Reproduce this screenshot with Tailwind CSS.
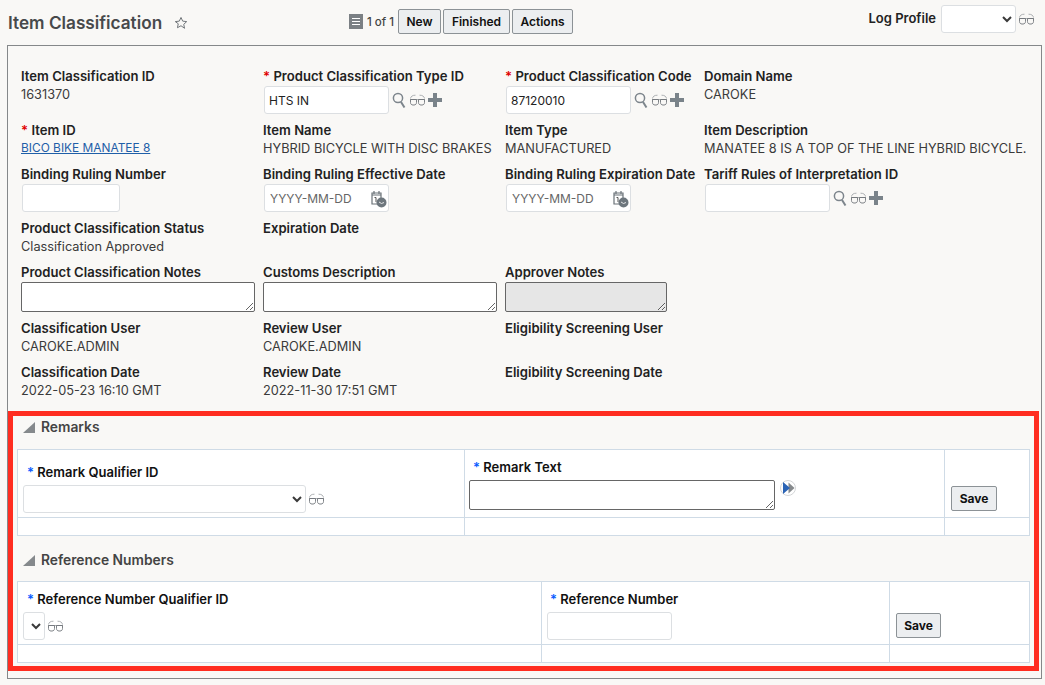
<!DOCTYPE html>
<html lang="en">
    <head>
        <meta charset="UTF-8" />
        <title>Item Classification</title>
        <script src="https://cdn.jsdelivr.net/npm/@tailwindcss/browser@4"></script>
    </head>
    <body class="w-[1045px] h-[685px] overflow-hidden bg-[#f9f8f6] font-['Inter','Liberation_Sans',sans-serif] text-[12.750px] leading-[18px] text-[#3a3a3a]">
        <!-- shared icons -->
        <svg class="hidden">
            <symbol id="glasses" viewBox="0 0 17 12">
                <path d="M1.500 4.500C1.800 2.400 3.400 1.200 6.500 1.200M15.500 4.500C15.200 2.400 13.600 1.200 10.500 1.200M1 5.500H16" fill="none" stroke="#9a9ea2" stroke-width="0.800" />
                <path d="M1.500 5.500H7.500V8.500C7.500 10 6.500 11 5 11H4C2.500 11 1.500 10 1.500 8.500Z" fill="none" stroke="#6f7479" stroke-width="0.900" />
                <path d="M9.500 5.500H15.500V8.500C15.500 10 14.500 11 13 11H12C10.500 11 9.500 10 9.500 8.500Z" fill="none" stroke="#6f7479" stroke-width="0.900" />
            </symbol>
            <symbol id="search" viewBox="0 0 15 16">
                <circle cx="6" cy="6" r="4.600" fill="none" stroke="#7d858c" stroke-width="1.500" />
                <path d="M9 10L12.500 15.500" stroke="#7d858c" stroke-width="2" />
            </symbol>
            <symbol id="plus" viewBox="0 0 14 14">
                <path d="M5 0H9V5H14V9H9V14H5V9H0V5H5Z" fill="#7a838a" />
            </symbol>
            <symbol id="calendar" viewBox="0 0 17 18">
                <path d="M2 3H11V14H2Z" fill="none" stroke="#6b7278" stroke-width="1.200" />
                <path d="M4 1V4M9 1V4M2 5H11" stroke="#6b7278" stroke-width="1.200" />
                <path d="M4.500 7.500H6V12" fill="none" stroke="#555" stroke-width="1" />
                <circle cx="11.500" cy="12.500" r="5" fill="#6d767d" />
                <path d="M9 12L11.500 13.500L14 12.500" fill="none" stroke="#fff" stroke-width="0.800" />
            </symbol>
            <symbol id="triangle" viewBox="0 0 12 12">
                <path d="M12 1V12H0Z" fill="#85898c" />
            </symbol>
        </svg>

        <!-- page header -->
        <div class="flex h-[45px] items-start">
            <h1 class="ml-2 mt-[13px] w-[154px] whitespace-nowrap text-[17.200px] leading-5 font-semibold text-[#47494b]">Item Classification</h1>
            <svg class="ml-[12px] mt-[16px] w-[14px] h-[14px]" viewBox="0 0 24 24" fill="none" stroke="#6f7478" stroke-width="1.700"><path d="M12 2.500l2.900 6.300 6.900.8-5.100 4.700 1.400 6.800L12 16.700l-6.100 3.400 1.400-6.800L2.200 9.600l6.900-.8z" /></svg>
            <div class="ml-[161px] mt-[14px] flex h-[15px] w-[14px] flex-col justify-center gap-[2px] bg-[#7b8084] px-[3px]">
                <span class="h-px bg-white"></span><span class="h-px bg-white"></span><span class="h-px bg-white"></span>
            </div>
            <span class="ml-[4px] mt-[13px] w-[31px] whitespace-nowrap text-[11.500px] font-medium text-[#444]">1 of 1</span>
            <button class="mt-[9px] h-[25px] w-[43px] rounded-[2px] border border-[#8c9296] bg-[#eceef0] text-[12px] font-semibold text-[#111]">New</button>
            <button class="ml-[2px] mt-[9px] h-[25px] w-[67px] rounded-[2px] border border-[#8c9296] bg-[#eceef0] text-[12px] font-semibold text-[#111]">Finished</button>
            <button class="ml-[2px] mt-[9px] h-[25px] w-[61px] rounded-[2px] border border-[#8c9296] bg-[#eceef0] text-[12px] font-semibold text-[#111]">Actions</button>
            <span class="ml-auto mt-[9px] text-[13px] font-semibold text-[#222]">Log Profile</span>
            <select class="ml-[5px] mt-[5px] h-[28px] w-[75px] rounded-[3px] border border-[#dcdfe2] bg-white"></select>
            <svg class="ml-[2px] mr-[10px] mt-[13px] w-[17px] h-[12px]"><use href="#glasses" /></svg>
        </div>

        <!-- main panel -->
        <div class="ml-[7px] h-[634px] w-[1035px] border border-[#85888a]">
            <div class="grid grid-cols-[242px_242px_199px_1fr] grid-rows-[54px_44px_54px_44px_56px_44px_48px] pl-[13px] pt-[21px]">
                <div>
                    <div class="text-[13.100px] font-semibold text-[#222]">Item Classification ID</div>
                    <div class="mt-px">1631370</div>
                </div>
                <div>
                    <div class="text-[13.100px] font-semibold text-[#222]"><span class="text-[#e00000]">*</span> Product Classification Type ID</div>
                    <div class="mt-px flex items-center">
                        <input value="HTS IN" class="ml-px h-[28px] w-[125px] rounded-[3px] border border-[#dcdfe2] bg-white px-[4px] text-[12px] text-[#222]" />
                        <svg class="ml-[3px] w-[15px] h-[16px]"><use href="#search" /></svg>
                        <svg class="ml-[2px] w-[17px] h-[12px]"><use href="#glasses" /></svg>
                        <svg class="ml-[2px] w-[14px] h-[14px]"><use href="#plus" /></svg>
                    </div>
                </div>
                <div>
                    <div class="whitespace-nowrap text-[13.100px] font-semibold text-[#222]"><span class="text-[#e00000]">*</span> Product Classification Code</div>
                    <div class="mt-px flex items-center">
                        <input value="87120010" class="ml-px h-[28px] w-[125px] rounded-[3px] border border-[#dcdfe2] bg-white px-[4px] text-[12px] text-[#222]" />
                        <svg class="ml-[3px] w-[15px] h-[16px]"><use href="#search" /></svg>
                        <svg class="ml-[2px] w-[17px] h-[12px]"><use href="#glasses" /></svg>
                        <svg class="ml-[2px] w-[14px] h-[14px]"><use href="#plus" /></svg>
                    </div>
                </div>
                <div>
                    <div class="text-[13.100px] font-semibold text-[#222]">Domain Name</div>
                    <div class="mt-px">CAROKE</div>
                </div>

                <div>
                    <div class="text-[13.100px] font-semibold text-[#222]"><span class="text-[#e00000]">*</span> Item ID</div>
                    <a href="#" class="text-[11.900px] text-[#1f5fa8] underline">BICO BIKE MANATEE 8</a>
                </div>
                <div>
                    <div class="text-[13.100px] font-semibold text-[#222]">Item Name</div>
                    <div class="mt-px whitespace-nowrap">HYBRID BICYCLE WITH DISC BRAKES</div>
                </div>
                <div>
                    <div class="text-[13.100px] font-semibold text-[#222]">Item Type</div>
                    <div class="mt-px">MANUFACTURED</div>
                </div>
                <div>
                    <div class="text-[13.100px] font-semibold text-[#222]">Item Description</div>
                    <div class="mt-px whitespace-nowrap">MANATEE 8 IS A TOP OF THE LINE HYBRID BICYCLE.</div>
                </div>

                <div>
                    <div class="text-[13.100px] font-semibold text-[#222]">Binding Ruling Number</div>
                    <input class="ml-px mt-px h-[28px] w-[98px] rounded-[3px] border border-[#dcdfe2] bg-white" />
                </div>
                <div>
                    <div class="whitespace-nowrap text-[13.100px] font-semibold text-[#222]">Binding Ruling Effective Date</div>
                    <div class="relative ml-px mt-px h-[28px] w-[125px]">
                        <input placeholder="YYYY-MM-DD" class="h-[28px] w-[125px] rounded-[3px] border border-[#dcdfe2] bg-white px-[5px] text-[12px] placeholder:text-[#666]" />
                        <svg class="absolute right-[2px] top-[6px] w-[17px] h-[18px]"><use href="#calendar" /></svg>
                    </div>
                </div>
                <div>
                    <div class="whitespace-nowrap text-[13.100px] font-semibold text-[#222]">Binding Ruling Expiration Date</div>
                    <div class="relative ml-px mt-px h-[28px] w-[125px]">
                        <input placeholder="YYYY-MM-DD" class="h-[28px] w-[125px] rounded-[3px] border border-[#dcdfe2] bg-white px-[5px] text-[12px] placeholder:text-[#666]" />
                        <svg class="absolute right-[2px] top-[6px] w-[17px] h-[18px]"><use href="#calendar" /></svg>
                    </div>
                </div>
                <div>
                    <div class="whitespace-nowrap text-[13.100px] font-semibold text-[#222]">Tariff Rules of Interpretation ID</div>
                    <div class="mt-px flex items-center">
                        <input class="ml-px h-[28px] w-[125px] rounded-[3px] border border-[#dcdfe2] bg-white" />
                        <svg class="ml-[3px] w-[15px] h-[16px]"><use href="#search" /></svg>
                        <svg class="ml-[2px] w-[17px] h-[12px]"><use href="#glasses" /></svg>
                        <svg class="ml-[2px] w-[14px] h-[14px]"><use href="#plus" /></svg>
                    </div>
                </div>

                <div>
                    <div class="text-[13.100px] font-semibold text-[#222]">Product Classification Status</div>
                    <div class="mt-px">Classification Approved</div>
                </div>
                <div class="text-[13.100px] font-semibold text-[#222]">Expiration Date</div>
                <div></div>
                <div></div>

                <div>
                    <div class="text-[13.100px] font-semibold text-[#222]">Product Classification Notes</div>
                    <textarea class="mt-px block h-[30px] w-[234px] rounded-[2px] border border-[#666] bg-white"></textarea>
                </div>
                <div>
                    <div class="text-[13.100px] font-semibold text-[#222]">Customs Description</div>
                    <textarea class="mt-px block h-[30px] w-[234px] rounded-[2px] border border-[#666] bg-white"></textarea>
                </div>
                <div>
                    <div class="text-[13.100px] font-semibold text-[#222]">Approver Notes</div>
                    <textarea disabled class="mt-px block h-[30px] w-[162px] rounded-[2px] border border-[#666] bg-[#e6e6e6]"></textarea>
                </div>
                <div></div>

                <div>
                    <div class="text-[13.100px] font-semibold text-[#222]">Classification User</div>
                    <div class="mt-px">CAROKE.ADMIN</div>
                </div>
                <div>
                    <div class="text-[13.100px] font-semibold text-[#222]">Review User</div>
                    <div class="mt-px">CAROKE.ADMIN</div>
                </div>
                <div class="whitespace-nowrap text-[13.100px] font-semibold text-[#222]">Eligibility Screening User</div>
                <div></div>

                <div>
                    <div class="text-[13.100px] font-semibold text-[#222]">Classification Date</div>
                    <div class="mt-px">2022-05-23 16:10 GMT</div>
                </div>
                <div>
                    <div class="text-[13.100px] font-semibold text-[#222]">Review Date</div>
                    <div class="mt-px">2022-11-30 17:51 GMT</div>
                </div>
                <div class="whitespace-nowrap text-[13.100px] font-semibold text-[#222]">Eligibility Screening Date</div>
                <div></div>
            </div>

            <!-- highlighted detail sections -->
            <div class="h-[260px] w-[1031px] border-[5px] border-[#ff2d20] pl-[4px]">
                <div class="flex h-[33px] items-start pt-[2px]">
                    <svg class="ml-[6px] mt-[3px] w-[12px] h-[12px]"><use href="#triangle" /></svg>
                    <span class="ml-[6px] text-[13.800px] font-semibold text-[#444]">Remarks</span>
                </div>
                <table class="w-[1013px] table-fixed border-collapse bg-white">
                    <colgroup>
                        <col class="w-[447px]" />
                        <col class="w-[480px]" />
                        <col />
                    </colgroup>
                    <tbody>
                        <tr class="h-[68px]">
                            <td class="border border-[#cfdbe6] pl-[5px] pt-[13px] align-top">
                                <div class="pl-[4px] text-[13px] font-semibold text-[#111]"><span class="text-[#0a5cff]">*</span> Remark Qualifier ID</div>
                                <div class="mt-[4px] flex items-center">
                                    <select class="h-[28px] w-[283px] rounded-[3px] border border-[#dcdfe2] bg-white"></select>
                                    <svg class="ml-[2px] w-[17px] h-[12px]"><use href="#glasses" /></svg>
                                </div>
                            </td>
                            <td class="border border-[#cfdbe6] pl-[4px] pt-[8px] align-top">
                                <div class="pl-[4px] text-[13px] font-semibold text-[#111]"><span class="text-[#0a5cff]">*</span> Remark Text</div>
                                <div class="mt-[4px] flex items-start">
                                    <textarea class="block h-[30px] w-[306px] rounded-[2px] border border-[#666] bg-white"></textarea>
                                    <svg class="ml-[5px] w-[16px] h-[16px]" viewBox="0 0 16 16">
                                        <circle cx="8" cy="8" r="7.500" fill="#fff" stroke="#d4d6d8" />
                                        <path d="M8.500 2.500L14.500 8L8.500 13.500Z" fill="#85898c" />
                                        <path d="M3 2L10 8L3 14Z" fill="#2a63b5" />
                                    </svg>
                                </div>
                            </td>
                            <td class="border border-[#cfdbe6] pl-[6px] pt-[36px] align-top">
                                <button class="block h-[25px] w-[46px] rounded-[2px] border border-[#8c9296] bg-[#eceef0] text-[12px] font-bold text-[#111]">Save</button>
                            </td>
                        </tr>
                        <tr class="h-[18px]">
                            <td class="border border-[#cfdbe6]"></td>
                            <td class="border border-[#cfdbe6]"></td>
                            <td class="border border-[#cfdbe6]"></td>
                        </tr>
                    </tbody>
                </table>

                <div class="flex h-[45px] items-start pt-[15px]">
                    <svg class="ml-[6px] mt-[3px] w-[12px] h-[12px]"><use href="#triangle" /></svg>
                    <span class="ml-[6px] text-[13.800px] font-semibold text-[#444]">Reference Numbers</span>
                </div>
                <table class="w-[1013px] table-fixed border-collapse bg-white">
                    <colgroup>
                        <col class="w-[524px]" />
                        <col class="w-[348px]" />
                        <col />
                    </colgroup>
                    <tbody>
                        <tr class="h-[63px]">
                            <td class="border border-[#cfdbe6] pl-[5px] pt-[8px] align-top">
                                <div class="pl-[4px] text-[13px] font-semibold text-[#111]"><span class="text-[#0a5cff]">*</span> Reference Number Qualifier ID</div>
                                <div class="mt-[4px] flex items-center">
                                    <select class="h-[28px] w-[22px] rounded-[3px] border border-[#dcdfe2] bg-white"></select>
                                    <svg class="ml-[2px] w-[17px] h-[12px]"><use href="#glasses" /></svg>
                                </div>
                            </td>
                            <td class="border border-[#cfdbe6] pl-[5px] pt-[8px] align-top">
                                <div class="pl-[3px] text-[13px] font-semibold text-[#111]"><span class="text-[#0a5cff]">*</span> Reference Number</div>
                                <input class="mt-[4px] block h-[28px] w-[125px] rounded-[3px] border border-[#dcdfe2] bg-white" />
                            </td>
                            <td class="border border-[#cfdbe6] pl-[6px] pt-[31px] align-top">
                                <button class="block h-[25px] w-[45px] rounded-[2px] border border-[#8c9296] bg-[#eceef0] text-[12px] font-bold text-[#111]">Save</button>
                            </td>
                        </tr>
                        <tr class="h-[18px]">
                            <td class="border border-[#cfdbe6]"></td>
                            <td class="border border-[#cfdbe6]"></td>
                            <td class="border border-[#cfdbe6]"></td>
                        </tr>
                    </tbody>
                </table>
            </div>
        </div>
    </body>
</html>
